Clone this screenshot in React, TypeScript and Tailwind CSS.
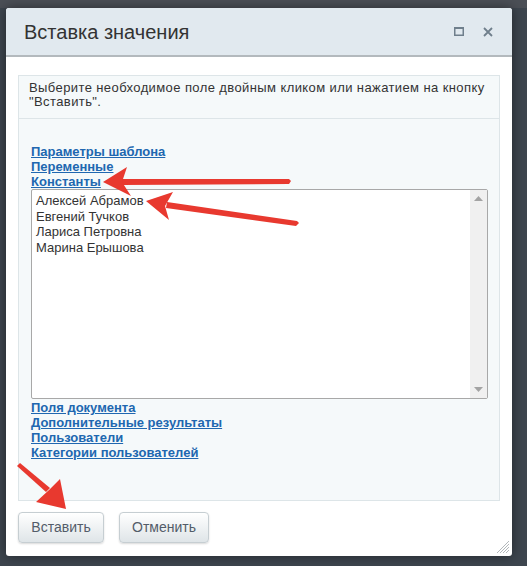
import { useState } from 'react'

const topLinks = ['Параметры шаблона', 'Переменные', 'Константы']
const bottomLinks = ['Поля документа', 'Дополнительные результаты', 'Пользователи', 'Категории пользователей']
const people = ['Алексей Абрамов', 'Евгений Тучков', 'Лариса Петровна', 'Марина Ерышова']

function NavLink({ label }: { label: string }) {
  return (
    <a href="#" className="block w-fit text-[13px] font-bold leading-[15px] text-[#2067b0] underline">
      {label}
    </a>
  )
}

function Arrows() {
  // red annotation arrows drawn over the dialog
  return (
    <svg className="pointer-events-none absolute inset-0" width={527} height={566} viewBox="0 0 527 566">
      <g fill="#e8392f">
        <polygon points="289,179 291,181 289,184 122,185 122,179" />
        <polygon points="103,182 127,167 122,182 131,196" />
        <polygon points="297,221 299,223 296,226 166,208 167,202" />
        <polygon points="146,201 173,192 165,206 169,220" />
        <polygon points="17,466 20,463 50,488 46,492" />
        <polygon points="66,509 36,502 49,490 60,479" />
      </g>
    </svg>
  )
}

export default function App() {
  const [selected] = useState<number | null>(null)

  return (
    <div
      className="relative h-[566px] w-[527px] overflow-hidden bg-[#3d454e] pl-[6px] pt-[8px]"
      style={{ fontFamily: '"Liberation Sans", Arial, sans-serif' }}
    >
      <div className="absolute left-0 top-0 h-[8px] w-full bg-[#4b4f56]" />
      <div className="relative w-[506px] rounded-[3px] bg-white shadow-[0_0_12px_rgba(0,0,0,0.45)]">
        <div className="flex h-[49px] items-center rounded-t-[3px] border-b-2 border-[#b3b9bd] bg-[#e1e9ef] pl-[18px] pr-[19px]">
          <span className="text-[20px] text-[#333]">Вставка значения</span>
          <div className="ml-auto flex items-center gap-[19px]">
            <svg width="10" height="9" viewBox="0 0 10 9">
              <rect x="0.75" y="1" width="8.5" height="7.25" fill="none" stroke="#6f7f8c" strokeWidth="1.5" />
              <rect x="0" y="0" width="10" height="2" fill="#6f7f8c" />
            </svg>
            <svg width="10" height="10" viewBox="0 0 10 10">
              <path d="M1 1L9 9M9 1L1 9" stroke="#6f7f8c" strokeWidth="1.8" />
            </svg>
          </div>
        </div>

        <div className="px-[12px] pb-[13px] pt-[18px]">
          <div className="border border-[#dde5e8] bg-[#f5f9fa]">
            <div className="border-b border-[#dde5e8] pb-[9px] pl-[10px] pr-[4px] pt-[5px] text-[13px] leading-[14px] tracking-[0.4px] text-[#333]">
              Выберите необходимое поле двойным кликом или нажатием на кнопку
              <br />
              "Вставить".
            </div>
            <div className="pb-[40px] pl-[12px] pr-[12px] pt-[25px]">
              {topLinks.map((l) => (
                <NavLink key={l} label={l} />
              ))}
              <div className="flex h-[210px] w-[457px] rounded-[2px] border border-[#a8a8a8] bg-white">
                <div className="flex-1 pl-[4px] pt-[3px] text-[13px] leading-[15.5px] text-[#333]">
                  {people.map((p, i) => (
                    <div key={p} className={i === selected ? 'bg-[#3875d7] text-white' : ''}>
                      {p}
                    </div>
                  ))}
                </div>
                <div className="flex w-[17px] flex-col items-center justify-between bg-[#f0f0f0] py-[6px]">
                  <svg width="9" height="5" viewBox="0 0 9 5">
                    <polygon points="4.5,0 9,5 0,5" fill="#a3a3a3" />
                  </svg>
                  <svg width="9" height="5" viewBox="0 0 9 5">
                    <polygon points="0,0 9,0 4.5,5" fill="#a3a3a3" />
                  </svg>
                </div>
              </div>
              <div className="pt-[1px]">
                {bottomLinks.map((l) => (
                  <NavLink key={l} label={l} />
                ))}
              </div>
            </div>
          </div>

          <div className="mt-[11px] flex gap-[15px]">
            <button className="h-[31px] w-[86px] rounded-[4px] border border-[#c6ced2] bg-gradient-to-b from-white to-[#dfe5e8] text-[14px] text-[#535c69] shadow-[0_1px_2px_rgba(0,0,0,0.15)]">
              Вставить
            </button>
            <button className="h-[31px] w-[90px] rounded-[4px] border border-[#c6ced2] bg-gradient-to-b from-white to-[#dfe5e8] text-[14px] text-[#535c69] shadow-[0_1px_2px_rgba(0,0,0,0.15)]">
              Отменить
            </button>
          </div>
        </div>

        <svg className="absolute bottom-[3px] right-[3px]" width="12" height="12" viewBox="0 0 12 12">
          <path d="M12 0L0 12M12 3L3 12M12 6L6 12M12 9L9 12" stroke="#a0a6aa" strokeWidth="0.8" />
        </svg>
      </div>
      <Arrows />
    </div>
  )
}
